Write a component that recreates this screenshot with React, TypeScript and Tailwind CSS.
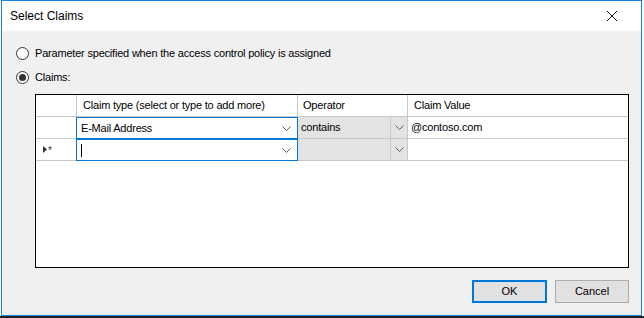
import React from "react";

// Windows-style "Select Claims" dialog

const font = { fontFamily: '"Liberation Sans", Arial, sans-serif' };

function Chevron() {
  return (
    <svg width="9" height="5" viewBox="0 0 9 5" className="shrink-0">
      <path d="M0.5 0.5 L4.5 4.5 L8.5 0.5" fill="none" stroke="#606060" strokeWidth="1" />
    </svg>
  );
}

function Radio({ checked, label }: { checked?: boolean; label: string }) {
  return (
    <div className="flex items-center h-[13px] gap-[6px]">
      <div className="w-[13px] h-[13px] rounded-full border border-[#333] bg-white flex items-center justify-center">
        {checked && <div className="w-[7px] h-[7px] rounded-full bg-[#333]" />}
      </div>
      <span className="text-[11px] tracking-[-0.2px] text-black leading-none">{label}</span>
    </div>
  );
}

function ComboCell({ value, caret }: { value?: string; caret?: boolean }) {
  return (
    <div className="w-[222px] -ml-px h-[22px] border border-[#0078d7] bg-white flex items-center pl-[4px] pr-[6px]">
      <span className="flex-1 text-[11px] tracking-[-0.2px] text-black flex items-center">
        {value}
        {caret && <span className="inline-block w-px h-[13px] bg-black" />}
      </span>
      <Chevron />
    </div>
  );
}

function OperatorCell({ value }: { value?: string }) {
  return (
    <div className="w-[110px] h-[22px] border-r border-b border-[#c8c8c8] bg-[#e3e3e3] flex">
      <div className="flex-1 flex items-center pl-[3px] text-[11px] tracking-[-0.2px] text-black">{value}</div>
      <div className="w-[17px] border-l border-[#c8c8c8] flex items-center justify-center">
        <Chevron />
      </div>
    </div>
  );
}

export default function App() {
  return (
    <div className="w-[644px] h-[318px] bg-white border-b-2 border-[#222] pl-px" style={font}>
      <div className="w-[641px] h-[316px] border border-[#1883d7] flex flex-col">
        <div className="h-[30px] bg-white flex items-center justify-between pl-[8px] pr-[24px]">
          <span className="text-[12px] text-black">Select Claims</span>
          <svg width="10" height="10" viewBox="0 0 10 10">
            <path d="M0 0 L10 10 M10 0 L0 10" stroke="#111" strokeWidth="1" />
          </svg>
        </div>
        <div className="flex-1 bg-[#f0f0f0] flex flex-col pl-[14px] pr-[11px]">
          <div className="mt-[16px] flex flex-col gap-[11px]">
            <Radio label="Parameter specified when the access control policy is assigned" />
            <Radio checked label="Claims:" />
          </div>
          <div className="ml-[19px] mt-[10px] w-[594px] h-[174px] border border-black bg-white flex flex-col">
            <div className="flex h-[22px] text-[11px] tracking-[-0.2px] text-black">
              <div className="w-[41px] border-r border-b border-[#c8c8c8]" />
              <div className="w-[221px] border-r border-b border-[#c8c8c8] flex items-center pl-[6px]">
                Claim type (select or type to add more)
              </div>
              <div className="w-[110px] border-r border-b border-[#c8c8c8] flex items-center pl-[5px]">Operator</div>
              <div className="w-[220px] border-b border-[#c8c8c8] flex items-center pl-[6px]">Claim Value</div>
            </div>
            <div className="flex h-[22px]">
              <div className="w-[41px] border-r border-b border-[#c8c8c8]" />
              <ComboCell value="E-Mail Address" />
              <OperatorCell value="contains" />
              <div className="w-[220px] border-b border-[#c8c8c8] flex items-center pl-[3px] text-[11px] tracking-[-0.2px] text-black">
                @contoso.com
              </div>
            </div>
            <div className="flex h-[22px]">
              <div className="w-[41px] border-r border-b border-[#c8c8c8] flex items-center pl-[7px] gap-px">
                <svg width="4" height="7" viewBox="0 0 4 7">
                  <path d="M0 0 L4 3.5 L0 7 Z" fill="#333" />
                </svg>
                <span className="text-[10px] text-[#333] leading-none mt-[2px]">*</span>
              </div>
              <ComboCell caret />
              <OperatorCell />
              <div className="w-[220px] border-b border-[#c8c8c8]" />
            </div>
          </div>
          <div className="mt-[12px] flex justify-end gap-[8px] pr-px">
            <button className="w-[75px] h-[23px] bg-[#e1e1e1] border-2 border-[#0078d7] text-[11px] text-black">
              OK
            </button>
            <button className="w-[74px] h-[23px] bg-[#e1e1e1] border border-[#adadad] text-[11px] text-black">
              Cancel
            </button>
          </div>
        </div>
      </div>
    </div>
  );
}
